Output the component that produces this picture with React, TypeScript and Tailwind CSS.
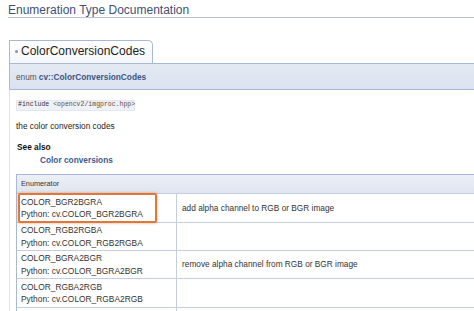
import React from 'react';

const rows = [
  { name: 'COLOR_BGR2BGRA', desc: 'add alpha channel to RGB or BGR image', h: 'h-[29px]', mark: true },
  { name: 'COLOR_RGB2RGBA', desc: '', h: 'h-[28px]', mark: false },
  { name: 'COLOR_BGRA2BGR', desc: 'remove alpha channel from RGB or BGR image', h: 'h-[28px]', mark: false },
  { name: 'COLOR_RGBA2RGB', desc: '', h: 'h-[29px]', mark: false },
];

const App = () => {
  return (
    <div className="w-[474px] h-[311px] overflow-hidden bg-white font-['Liberation_Sans',Arial,sans-serif]">
      {/* page title */}
      <div className="ml-[8px] mt-[3px] border-b border-[#b7c2d6]">
        <h2 className="text-[12px] leading-[14px] text-[#3e5078]">Enumeration Type Documentation</h2>
      </div>

      <div className="mt-[22px] w-[560px]">
        {/* tab */}
        <div className="ml-[9px] w-[144px] h-[23px] border border-b-0 border-[#a8b8d9] rounded-tr-[5px] bg-gradient-to-b from-white to-[#f4f6fb] flex items-start">
          <span className="mt-[9px] ml-[5px] w-[3px] h-[3px] bg-[#8a93a8] rounded-full" />
          <span className="ml-[3px] mt-[3px] text-[12px] leading-[14px] text-[#1e1e1e]">ColorConversionCodes</span>
        </div>

        {/* prototype band */}
        <div className="ml-[9px] h-[27px] border-y border-l border-[#a8b8d9] bg-gradient-to-b from-[#e4e9f3] to-[#dbe2ef] flex items-center pl-[6px] pt-[1px] text-[8.3px] text-[#555]">
          enum <span className="ml-[2px] font-bold text-[#3c5584]">cv::ColorConversionCodes</span>
        </div>

        {/* doc body */}
        <div className="ml-[9px] border-l border-[#dfe4ee] pl-[6px] pt-[10px] pb-[20px] text-[8.3px] text-[#222]">
          <div className="w-[119px] h-[11px] bg-[#eef1f7] border border-[#e2e7f0] flex items-center pl-[1px] font-['Liberation_Mono',monospace] text-[6.5px] leading-none">
            <span className="text-[#333]">#include</span>
            <span className="ml-[4px] text-[#6a4f2c]">&lt;opencv2/imgproc.hpp&gt;</span>
          </div>

          <p className="mt-[10px] leading-[10px]">the color conversion codes</p>

          <div className="mt-[11px] font-bold leading-[10px] text-[#111] ml-[1px]">See also</div>
          <div className="mt-[3px] ml-[24px] font-bold leading-[10px] text-[#3d5a8e]">Color conversions</div>

          {/* enumerator table */}
          <div className="mt-[9px] border-l border-t border-[#a8b8d9]">
            <div className="h-[18px] bg-gradient-to-b from-[#eceff6] to-[#dfe5f0] flex items-center pl-[4px] text-[7.3px] text-[#333]">
              Enumerator
            </div>
            {rows.map((r) => (
              <div key={r.name} className={`${r.h} flex border-t border-[#c5cee0]`}>
                <div className="relative w-[160px] shrink-0 border-r border-[#c5cee0] pl-[4px] flex flex-col justify-center text-[8.4px] text-[#333] leading-[12.5px]">
                  <span>{r.name}</span>
                  <span>Python: cv.{r.name}</span>
                  {r.mark && (
                    <div className="absolute left-[1px] top-[-1px] w-[139px] h-[30px] border-2 border-[#dc7a3e] rounded-[2px] shadow-[0_0_2px_1px_rgba(220,122,62,0.35)]" />
                  )}
                </div>
                <div className="flex-1 pl-[5px] flex items-center text-[#333]">{r.desc}</div>
              </div>
            ))}
            <div className="h-[29px] flex border-t border-[#c5cee0]">
              <div className="w-[160px] shrink-0 border-r border-[#c5cee0]" />
              <div className="flex-1" />
            </div>
          </div>
        </div>
      </div>
    </div>
  );
};

export default App;
